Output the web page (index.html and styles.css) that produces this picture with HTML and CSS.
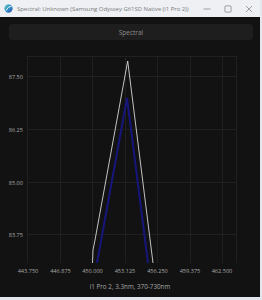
FILE: index.html
```html
<!DOCTYPE html>
<html lang="en">
<head>
    <meta charset="UTF-8">
    <title>Spectral</title>
    <link rel="stylesheet" href="styles.css">
</head>
<body>
    <div class="window">
        <div class="titlebar">
            <svg class="app-icon" width="9" height="9" viewBox="0 0 10 10">
                <defs>
                    <linearGradient id="globe" x1="0" y1="0" x2="1" y2="1">
                        <stop offset="0" stop-color="#6fd3c0"/>
                        <stop offset="0.5" stop-color="#2f8fc9"/>
                        <stop offset="1" stop-color="#3a55a8"/>
                    </linearGradient>
                </defs>
                <circle cx="5" cy="5" r="4.6" fill="url(#globe)"/>
                <path d="M2 7.5 Q5 2 8.5 2.5" stroke="#e8f4f0" stroke-width="1.1" fill="none"/>
            </svg>
            <span class="title">Spectral: Unknown (Samsung Odyssey G61SD Native (i1 Pro 2))</span>
            <div class="controls">
                <svg width="8" height="8" viewBox="0 0 8 8"><path d="M0.5 4 H7.5" stroke="#8a8a8a" stroke-width="0.8"/></svg>
                <svg width="8" height="8" viewBox="0 0 8 8"><rect x="0.9" y="0.9" width="6.2" height="6.2" rx="0.8" stroke="#8a8a8a" stroke-width="0.8" fill="none"/></svg>
                <svg width="8" height="8" viewBox="0 0 8 8"><path d="M1 1 L7 7 M7 1 L1 7" stroke="#8a8a8a" stroke-width="0.8"/></svg>
            </div>
        </div>

        <div class="content">
            <button class="mode-btn">Spectral</button>

            <svg class="chart" width="260" height="253" viewBox="0 0 260 253">
                <!-- grid -->
                <g stroke="#202020" stroke-width="1">
                    <line x1="27.5" y1="12" x2="27.5" y2="219"/>
                    <line x1="60.5" y1="12" x2="60.5" y2="219"/>
                    <line x1="92.5" y1="12" x2="92.5" y2="219"/>
                    <line x1="125.5" y1="12" x2="125.5" y2="219"/>
                    <line x1="157.5" y1="12" x2="157.5" y2="219"/>
                    <line x1="190.5" y1="12" x2="190.5" y2="219"/>
                    <line x1="222.5" y1="12" x2="222.5" y2="219"/>
                    <line x1="236.5" y1="12" x2="236.5" y2="219"/>
                    <line x1="27" y1="12.5" x2="237" y2="12.5"/>
                    <line x1="27" y1="32.5" x2="237" y2="32.5"/>
                    <line x1="27" y1="85.5" x2="237" y2="85.5"/>
                    <line x1="27" y1="138.5" x2="237" y2="138.5"/>
                    <line x1="27" y1="190.5" x2="237" y2="190.5"/>
                </g>

                <!-- data -->
                <polyline points="97,219 127,54 148,219" fill="none" stroke="#16167a" stroke-width="2"/>
                <polyline points="92.5,219 93,206 95,196 127.7,17 153,219" fill="none" stroke="#d6d6d6" stroke-width="0.9"/>

                <!-- y labels -->
                <g class="tick" text-anchor="end">
                    <text x="23" y="34.5">87.50</text>
                    <text x="23" y="87.5">86.25</text>
                    <text x="23" y="140.5">85.00</text>
                    <text x="23" y="192.5">83.75</text>
                </g>

                <!-- x labels -->
                <g class="tick" text-anchor="middle">
                    <text x="28" y="229">443.750</text>
                    <text x="60.5" y="229">446.875</text>
                    <text x="92.5" y="229">450.000</text>
                    <text x="125" y="229">453.125</text>
                    <text x="157.5" y="229">456.250</text>
                    <text x="190" y="229">459.375</text>
                    <text x="222" y="229">462.500</text>
                </g>

                <text class="caption" x="130" y="245" text-anchor="middle">i1 Pro 2, 3.3nm, 370-730nm</text>
            </svg>
        </div>
    </div>
</body>
</html>
```

FILE: styles.css
```css
body {
    margin: 0;
    width: 262px;
    height: 300px;
    overflow: hidden;
    background: #e4e7ee;
    font-family: 'Open Sans', 'Noto Sans', sans-serif;
}

.window {
    width: 260px;
    height: 297px;
    display: flex;
    flex-direction: column;
    background: #121212;
}

.titlebar {
    height: 17px;
    flex: none;
    display: flex;
    align-items: center;
    background: #eef0f4;
    padding-left: 4px;
    box-sizing: border-box;
}

.app-icon {
    flex: none;
}

.title {
    margin-left: 4px;
    font-size: 6px;
    color: #7c7c7c;
    white-space: nowrap;
    letter-spacing: -0.05px;
}

.controls {
    margin-left: auto;
    display: flex;
    gap: 13px;
    padding-right: 7px;
}

.content {
    flex: 1;
    display: flex;
    flex-direction: column;
}

.mode-btn {
    margin: 7px 7px 0 9px;
    height: 16px;
    border: none;
    border-radius: 4px;
    background: #1e1e1e;
    color: #8e8e8e;
    font-family: 'Open Sans', 'Noto Sans', sans-serif;
    font-size: 6.5px;
    padding: 0;
}

.chart {
    display: block;
    margin-top: 4px;
}

.tick {
    font-family: 'Open Sans', 'Noto Sans', sans-serif;
    font-size: 5.6px;
    fill: #a6a6a6;
}

.caption {
    font-family: 'Open Sans', 'Noto Sans', sans-serif;
    font-size: 6.3px;
    fill: #a6a6a6;
}
```
